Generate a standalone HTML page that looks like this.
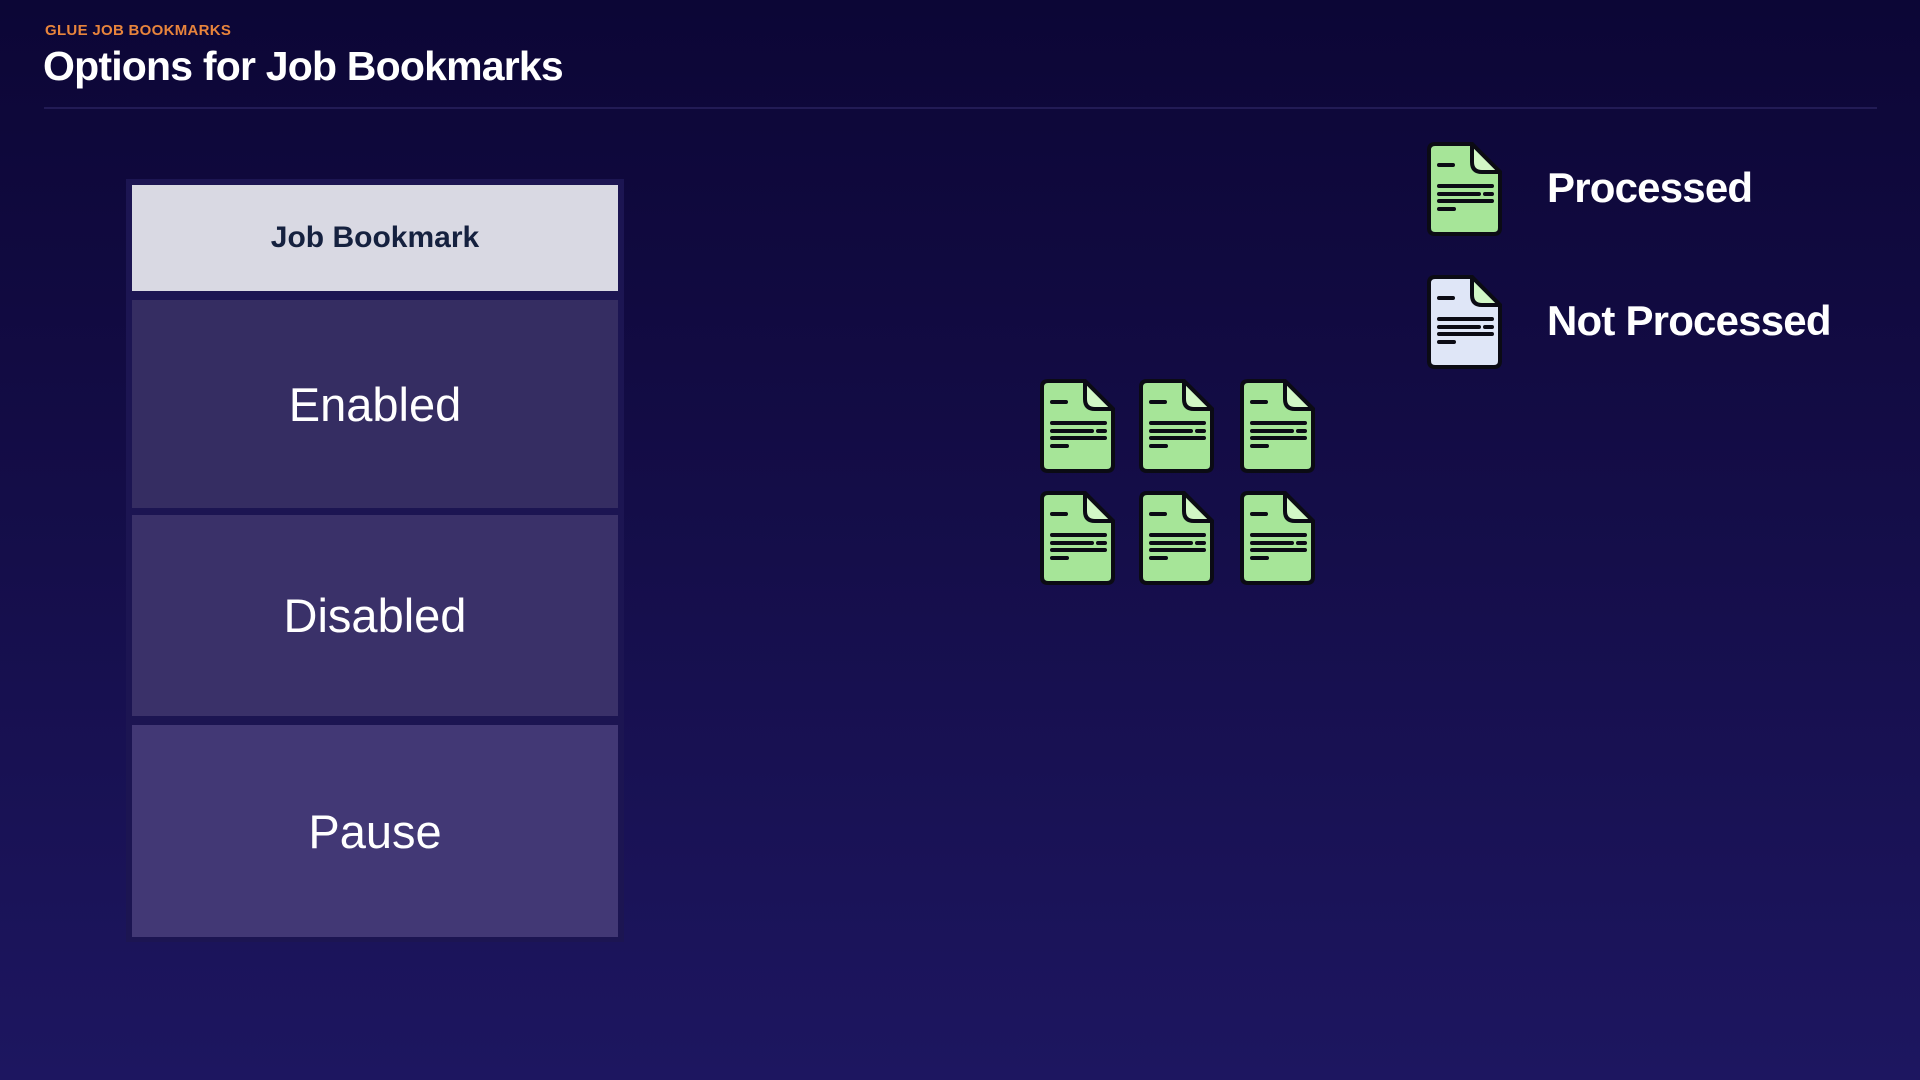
<!DOCTYPE html>
<html><head><style>
body{margin:0;width:1920px;height:1080px;overflow:hidden;background:linear-gradient(180deg,#0c0636 0%,#130c45 40%,#1d1660 100%);font-family:"Liberation Sans",sans-serif;position:relative}
.a{position:absolute}
.sub{left:45px;top:22px;font-size:15px;font-weight:bold;color:#e8843c;letter-spacing:.3px}
.t{left:43px;top:43px;font-size:41px;font-weight:bold;color:#fff;letter-spacing:-0.8px}
.line{left:44px;top:107px;width:1833px;height:2px;background:#221b55}
.outer{left:126px;top:179px;width:498px;height:763px;background:#1c1552}
.cell{position:absolute;left:6px;width:486px;display:flex;align-items:center;justify-content:center;color:#fff;font-size:47px}
.hd{top:6px;height:106px;background:#d9d9e3;color:#15213f;font-weight:bold;font-size:30px}
.doc{position:absolute;width:78px;height:95px}
.lg{position:absolute;left:1547px;font-size:42px;font-weight:bold;color:#fff;letter-spacing:-0.8px}
</style></head><body>
<div class="a sub">GLUE JOB BOOKMARKS</div>
<div class="a t">Options for Job Bookmarks</div>
<div class="a line"></div>
<div class="a outer">
<div class="cell hd">Job Bookmark</div>
<div class="cell" style="top:121px;height:208px;background:#352d62">Enabled</div>
<div class="cell" style="top:336px;height:201px;background:#3a3169">Disabled</div>
<div class="cell" style="top:546px;height:212px;background:#423875">Pause</div>
</div>
<svg width="0" height="0" style="position:absolute"><defs>
<g id="d">
<path d="M9 2H46L74 30V86Q74 92 68 92H9Q3 92 3 86V8Q3 2 9 2Z" stroke="#0b0b14" stroke-width="4" fill="currentColor"/>
<path d="M46 2V20Q46 30 56 30H74Z" stroke="#0b0b14" stroke-width="4" fill="#d2f7c6" stroke-linejoin="round"/>
<g stroke="#0b0b14" stroke-width="4" stroke-linecap="round"><path d="M13 23H27M13 44H66M13 52H53M59 52H66M13 59H66M13 67H28"/></g>
</g></defs></svg>
<svg class="doc" style="left:1039px;top:379px;color:#a6e598"><use href="#d"/></svg>
<svg class="doc" style="left:1138px;top:379px;color:#a6e598"><use href="#d"/></svg>
<svg class="doc" style="left:1239px;top:379px;color:#a6e598"><use href="#d"/></svg>
<svg class="doc" style="left:1039px;top:491px;color:#a6e598"><use href="#d"/></svg>
<svg class="doc" style="left:1138px;top:491px;color:#a6e598"><use href="#d"/></svg>
<svg class="doc" style="left:1239px;top:491px;color:#a6e598"><use href="#d"/></svg>
<svg class="doc" style="left:1426px;top:142px;color:#a6e598"><use href="#d"/></svg>
<svg class="doc" style="left:1426px;top:275px;color:#dfe6f7"><use href="#d"/></svg>
<div class="lg" style="top:164px">Processed</div>
<div class="lg" style="top:297px">Not Processed</div>
</body></html>
